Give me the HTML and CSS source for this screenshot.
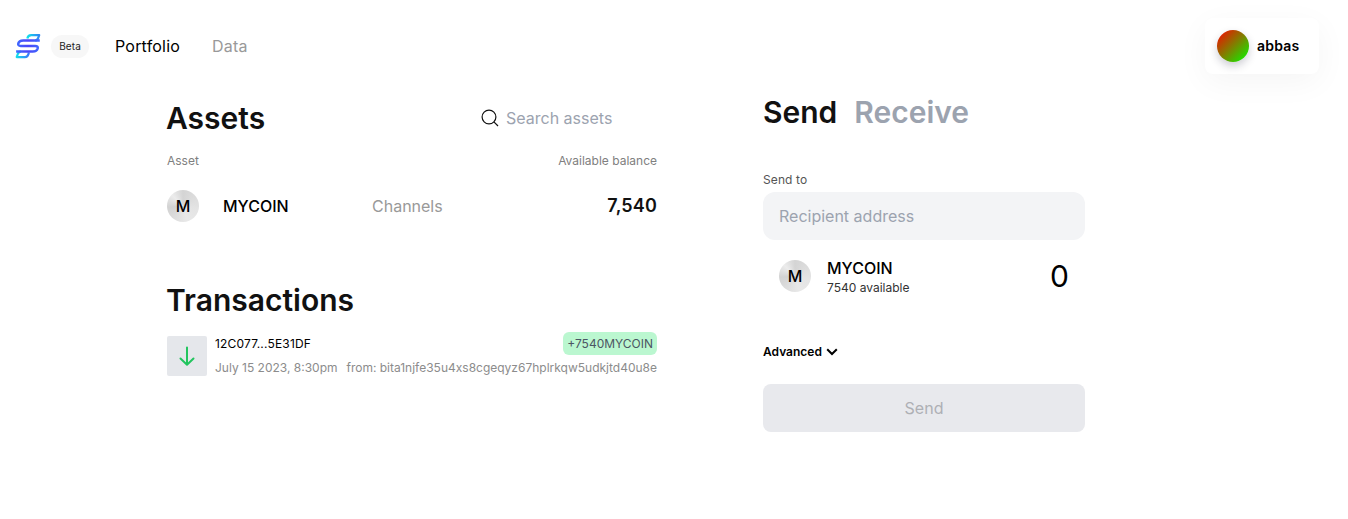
FILE: index.html
```html
<!DOCTYPE html>
<html lang="en">
<head>
<meta charset="utf-8">
<title>Portfolio</title>
<link rel="stylesheet" href="styles.css">
</head>
<body>
<header class="topbar">
  <svg class="logo" viewBox="0 0 26 26" width="26" height="26">
    <defs>
      <linearGradient id="blue" gradientUnits="userSpaceOnUse" x1="1" y1="0" x2="25" y2="0"><stop offset="0" stop-color="#3f6cff"/><stop offset=".5" stop-color="#4a45f8"/><stop offset="1" stop-color="#3f6cff"/></linearGradient>
      <linearGradient id="cyanTop"><stop offset="0" stop-color="#12e0ea"/><stop offset="1" stop-color="#2f86f5"/></linearGradient>
      <linearGradient id="cyanBottom"><stop offset="0" stop-color="#12dcea"/><stop offset="1" stop-color="#3a78fa"/></linearGradient>
    </defs>
    <g fill="none" stroke-width="2.2" stroke-linejoin="round">
      <path stroke="url(#cyanTop)" d="M12.300 5.500C12.800 2.800 14 2.100 16.200 2.100H24.200L23.200 5Q22.300 7.400 20.200 7.400"/>
      <path stroke="url(#cyanBottom)" d="M13.900 19.500C13.200 23.300 12 24.100 9.800 24.100H1.700L2.800 21Q3.700 18.600 5.800 18.600"/>
      <path stroke="url(#blue)" stroke-width="2.500" d="M24.800 7.400H8.200C5.200 7.400 3.800 8.500 3.300 10.400C2.900 12 3.700 12.900 5.700 12.900H20.200C22.300 12.900 23.100 13.900 22.700 15.500C22.100 17.600 20.700 18.600 17.800 18.600H1.100"/>
    </g>
  </svg>
  <span class="beta">Beta</span>
  <nav class="nav"><a class="nav-link nav-link-active">Portfolio</a><a class="nav-link">Data</a></nav>
  <div class="account"><span class="account-avatar"></span><span>abbas</span></div>
</header>
<main class="content">
  <section class="portfolio">
    <div class="assets-head">
      <h2 class="title">Assets</h2>
      <label class="search">
        <svg width="18" height="18" viewBox="0 0 18 18" fill="none" stroke="#111" stroke-width="1.200"><circle cx="8" cy="8" r="6.900"/><path d="M12.900 12.900L17 17"/></svg>
        <span>Search assets</span>
      </label>
    </div>
    <div class="columns"><span>Asset</span><span>Available balance</span></div>
    <div class="asset">
      <span class="coin">M</span><span class="asset-name">MYCOIN</span><span class="channels">Channels</span><span class="balance">7,540</span>
    </div>
    <h2 class="title transactions-title">Transactions</h2>
    <div class="transaction">
      <span class="direction"><svg width="24" height="24" viewBox="0 0 24 24" fill="none" stroke="#22c55e" stroke-width="2" stroke-linecap="round" stroke-linejoin="round"><path d="M12 3.500V20.500M5.500 14.500L12 20.700L18.500 14.500"/></svg></span>
      <div class="details">
        <div class="line"><span class="hash">12C077...5E31DF</span><span class="amount">+7540MYCOIN</span></div>
        <div class="line muted"><span>July 15 2023, 8:30pm</span><span>from: bita1njfe35u4xs8cgeqyz67hplrkqw5udkjtd40u8e</span></div>
      </div>
    </div>
  </section>
  <section class="transfer">
    <div class="tabs"><h2 class="title">Send</h2><h2 class="title title-inactive">Receive</h2></div>
    <div class="label">Send to</div>
    <div class="recipient">Recipient address</div>
    <div class="send-asset">
      <span class="coin">M</span>
      <div class="send-info"><span class="send-name">MYCOIN</span><span class="available">7540 available</span></div>
      <span class="send-amount">0</span>
    </div>
    <div class="advanced"><span>Advanced</span><svg width="12" height="8" viewBox="0 0 12 8" fill="none" stroke="#000" stroke-width="2"><path d="M1.200 1.200L6 6L10.800 1.200"/></svg></div>
    <button class="send-button">Send</button>
  </section>
</main>
</body>
</html>
```
FILE: styles.css
```css
* { box-sizing: border-box; }
body { margin: 0; background: #fff; color: #000; font-family: Inter, "Liberation Sans", sans-serif; font-size: 16px; line-height: 24px; }
.topbar { display: flex; align-items: center; height: 92px; padding: 0 29px 0 15px; }
.beta { display: flex; align-items: center; justify-content: center; width: 38px; height: 23px; margin-left: 10px; border-radius: 12px; background: #f7f7f7; color: #222; font-size: 10px; letter-spacing: .1px; }
.nav { display: flex; gap: 32px; margin-left: 26px; }
.nav-link { color: #999; letter-spacing: .2px; }
.nav-link-active { color: #000; }
.account { display: flex; align-items: center; gap: 8px; width: 114px; height: 56px; margin-left: auto; padding-left: 12px; border-radius: 8px; background: #fff; box-shadow: 0 8px 32px rgba(0, 0, 0, .045); font-size: 14px; font-weight: 600; letter-spacing: .2px; }
.account-avatar { width: 32px; height: 32px; border-radius: 50%; background: linear-gradient(135deg, #f00, #0f0); box-shadow: 0 4px 8px rgba(30, 30, 60, .22); }
.content { display: grid; grid-template-columns: 490px 322px; column-gap: 106px; padding-left: 167px; }
.title { margin: 0; color: #111; font-size: 30px; font-weight: 600; line-height: 36px; }
.portfolio .title { margin-left: -1px; }
.title-inactive { color: #9ca3af; }
.portfolio { padding-top: 8px; }
.assets-head { display: flex; justify-content: space-between; align-items: center; }
.search { display: flex; align-items: center; gap: 7px; width: 176px; color: #9ca3af; }
.columns { display: flex; justify-content: space-between; margin-top: 16px; color: #808080; font-size: 12px; line-height: 18px; }
.asset { display: grid; grid-template-columns: 56px 149px 1fr auto; align-items: center; height: 32px; margin-top: 20px; }
.coin { display: flex; align-items: center; justify-content: center; flex: none; width: 32px; height: 32px; border-radius: 50%; background: conic-gradient(from 315deg, #ececec, #d4d4d4 45deg, #e4e4e4 150deg, #e8e8e8 210deg, #d2d2d2 310deg, #ececec); font-weight: 500; }
.asset-name, .send-name { font-weight: 500; }
.channels { color: #999; }
.balance { color: #111; font-size: 18px; font-weight: 600; letter-spacing: .15px; }
.transactions-title { margin-top: 60px; }
.transaction { display: flex; gap: 8px; margin-top: 14px; }
.direction { display: flex; align-items: center; justify-content: center; width: 40px; height: 40px; margin-top: 4px; border-radius: 2px; background: #e5e7eb; }
.details { flex: 1; font-size: 12px; }
.line { display: flex; justify-content: space-between; align-items: center; height: 24px; white-space: nowrap; }
.hash { letter-spacing: .18px; }
.muted { color: #8c8c8c; }
.amount { height: 23px; margin-bottom: 2px; padding: 0 4px; border-radius: 6px; background: #bbf7d0; color: #4b5563; line-height: 23px; }
.tabs { display: flex; gap: 17px; padding-top: 2px; }
.label { margin-top: 41px; color: #555; font-size: 12px; line-height: 18px; letter-spacing: .1px; }
.recipient { display: flex; align-items: center; height: 48px; margin-top: 3px; padding: 0 16px; border-radius: 12px; background: #f3f4f6; color: #9ca3af; }
.send-asset { display: flex; align-items: center; height: 40px; margin-top: 16px; padding: 0 16px; }
.send-info { display: flex; flex-direction: column; margin-left: 16px; }
.send-name { line-height: 22px; }
.available { color: #333; font-size: 12px; line-height: 18px; margin-bottom: -2px; }
.send-amount { margin-left: auto; font-size: 30px; }
.advanced { display: flex; align-items: center; gap: 4px; margin-top: 44px; font-size: 12px; font-weight: 600; }
.send-button { display: block; width: 100%; height: 48px; margin-top: 20px; border: 0; border-radius: 8px; background: #e8e9ed; color: #aeb0b5; font: inherit; }
```
